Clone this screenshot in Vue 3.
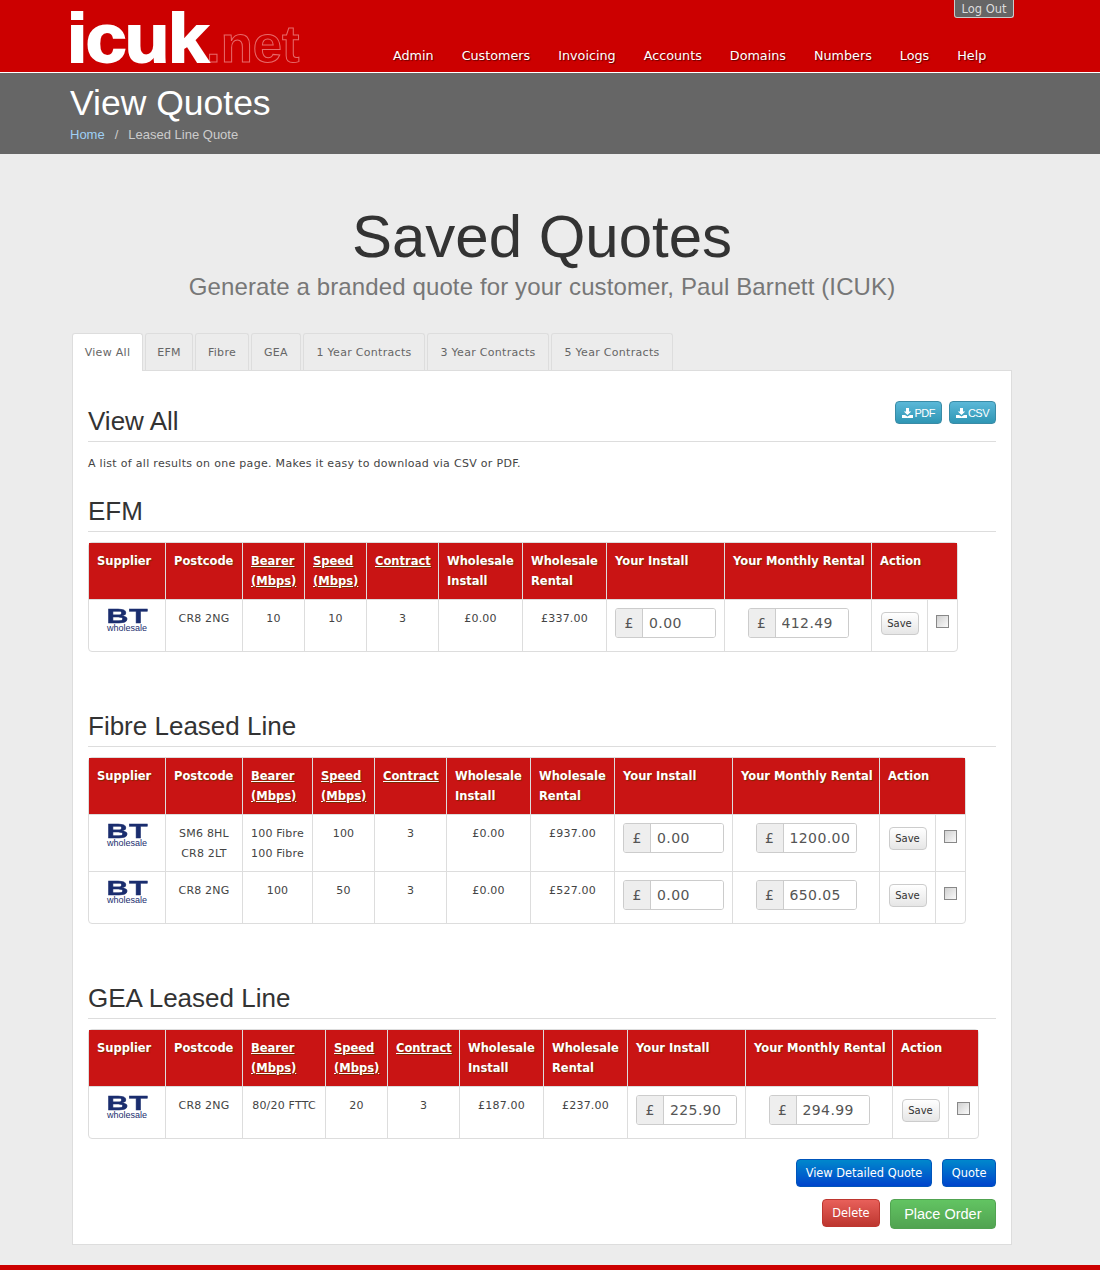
<script setup>
const tabs = ["View All", "EFM", "Fibre", "GEA", "1 Year Contracts", "3 Year Contracts", "5 Year Contracts"];
const navItems = ["Admin", "Customers", "Invoicing", "Accounts", "Domains", "Numbers", "Logs", "Help"];

const columns = [
    { lines: ["Supplier"] },
    { lines: ["Postcode"] },
    { lines: ["Bearer", "(Mbps)"], link: true },
    { lines: ["Speed", "(Mbps)"], link: true },
    { lines: ["Contract"], link: true },
    { lines: ["Wholesale", "Install"] },
    { lines: ["Wholesale", "Rental"] },
    { lines: ["Your Install"] },
    { lines: ["Your Monthly Rental"] },
    { lines: ["Action"], span: 2 },
];

const sections = [
    {
        title: "EFM",
        widths: [76, 77, 62, 62, 72, 84, 84, 118, 147, 56, 30],
        rows: [
            { postcode: ["CR8 2NG"], bearer: ["10"], speed: "10", contract: "3", install: "£0.00", rental: "£337.00", yourInstall: "0.00", yourRental: "412.49" },
        ],
    },
    {
        title: "Fibre Leased Line",
        widths: [76, 77, 70, 62, 72, 84, 84, 118, 147, 56, 30],
        rows: [
            { postcode: ["SM6 8HL", "CR8 2LT"], bearer: ["100 Fibre", "100 Fibre"], speed: "100", contract: "3", install: "£0.00", rental: "£937.00", yourInstall: "0.00", yourRental: "1200.00" },
            { postcode: ["CR8 2NG"], bearer: ["100"], speed: "50", contract: "3", install: "£0.00", rental: "£527.00", yourInstall: "0.00", yourRental: "650.05" },
        ],
    },
    {
        title: "GEA Leased Line",
        widths: [76, 77, 83, 62, 72, 84, 84, 118, 147, 56, 30],
        rows: [
            { postcode: ["CR8 2NG"], bearer: ["80/20 FTTC"], speed: "20", contract: "3", install: "£187.00", rental: "£237.00", yourInstall: "225.90", yourRental: "294.99" },
        ],
    },
];

function tableWidth(widths) {
    return widths.reduce((a, b) => a + b, 0) + 2;
}
</script>

<template>
    <div class="page">
        <header class="topbar">
            <div class="logo"><span class="logo-main">icuk</span><span class="logo-net">.net</span></div>
            <div class="topbar-right">
                <a class="logout">Log Out</a>
                <nav class="nav">
                    <a v-for="item in navItems" :key="item">{{ item }}</a>
                </nav>
            </div>
        </header>

        <div class="subhead">
            <h1>View Quotes</h1>
            <div class="crumbs"><a>Home</a><span class="sep">/</span><span>Leased Line Quote</span></div>
        </div>

        <main class="content">
            <div class="hero">
                <h2>Saved Quotes</h2>
                <p>Generate a branded quote for your customer, Paul Barnett (ICUK)</p>
            </div>

            <ul class="tabs">
                <li v-for="(tab, i) in tabs" :key="tab" :class="{ active: i == 0 }">{{ tab }}</li>
            </ul>

            <section class="panel">
                <div class="title-row">
                    <h3>View All</h3>
                    <div class="exports">
                        <a class="btn-info" v-for="label in ['PDF', 'CSV']" :key="label">
                            <svg width="11" height="10" viewBox="0 0 11 10">
                                <path d="M4 0h3v3.5h2.2L5.5 7 1.800 3.500H4z" fill="#fff" />
                                <path d="M0 7h3l2.500 1.500L8 7h3v3H0z" fill="#fff" />
                            </svg>{{ label }}
                        </a>
                    </div>
                </div>
                <p class="lead">A list of all results on one page. Makes it easy to download via CSV or PDF.</p>

                <div class="quote-section" v-for="section in sections" :key="section.title">
                    <h3 class="section-title">{{ section.title }}</h3>
                    <table class="quotes" :style="{ width: tableWidth(section.widths) + 'px' }">
                        <colgroup>
                            <col v-for="(w, i) in section.widths" :key="i" :style="{ width: w + 'px' }" />
                        </colgroup>
                        <thead>
                            <tr>
                                <th v-for="col in columns" :key="col.lines[0] + col.lines[1]" :colspan="col.span || 1">
                                    <template v-for="line in col.lines" :key="line">
                                        <a v-if="col.link" class="sort">{{ line }}</a>
                                        <span v-else>{{ line }}</span>
                                        <br />
                                    </template>
                                </th>
                            </tr>
                        </thead>
                        <tbody>
                            <tr v-for="(row, r) in section.rows" :key="r">
                                <td>
                                    <div class="bt">
                                        <span class="bt-mark">BT</span>
                                        <span class="bt-sub">wholesale</span>
                                    </div>
                                </td>
                                <td><div v-for="p in row.postcode" :key="p">{{ p }}</div></td>
                                <td><div v-for="(b, k) in row.bearer" :key="k">{{ b }}</div></td>
                                <td>{{ row.speed }}</td>
                                <td>{{ row.contract }}</td>
                                <td>{{ row.install }}</td>
                                <td>{{ row.rental }}</td>
                                <td>
                                    <div class="money"><span>£</span><input :value="row.yourInstall" /></div>
                                </td>
                                <td>
                                    <div class="money"><span>£</span><input :value="row.yourRental" /></div>
                                </td>
                                <td><button class="save">Save</button></td>
                                <td><input class="tick" type="checkbox" /></td>
                            </tr>
                        </tbody>
                    </table>
                </div>

                <div class="actions">
                    <a class="btn btn-blue">View Detailed Quote</a>
                    <a class="btn btn-blue">Quote</a>
                </div>
                <div class="actions second">
                    <a class="btn btn-red">Delete</a>
                    <a class="btn btn-green">Place Order</a>
                </div>
            </section>
        </main>

        <footer class="foot"></footer>
    </div>
</template>

<style>
html, body {
    margin: 0;
    background: #ececec;
}
</style>

<style scoped>
.page {
    width: 1100px;
    height: 1270px;
    overflow: hidden;
    background: #ececec;
    font-family: "DejaVu Sans", Verdana, sans-serif;
    font-size: 11px;
    line-height: 20px;
    color: #444;
}
.topbar {
    display: flex;
    height: 72px;
    padding-left: 70px;
    background: #cc0000;
    border-bottom: 1px solid #fff;
}
.logo {
    width: 323px;
    height: 72px;
    flex-shrink: 0;
    font-family: "Liberation Sans", Arial, sans-serif;
    font-weight: bold;
    line-height: 78px;
    white-space: nowrap;
}
.logo-main {
    display: inline-block;
    margin-left: -3px;
    margin-right: 7px;
    font-size: 69px;
    letter-spacing: -1.500px;
    color: #fff;
    -webkit-text-stroke: 2px #fff;
    transform: scaleX(1.06);
    transform-origin: left;
}
.logo-net {
    font-size: 52.500px;
    color: transparent;
    -webkit-text-stroke: 1px #e76a6a;
}
.topbar-right {
    width: 621px;
    display: flex;
    flex-direction: column;
}
.logout {
    align-self: flex-end;
    box-sizing: border-box;
    width: 60px;
    height: 18px;
    background: #666;
    border: 1px solid #ccc;
    border-top: 0;
    border-radius: 0 0 3px 3px;
    color: #ddd;
    font-size: 11.5px;
    line-height: 18px;
    text-align: center;
}
.nav {
    display: flex;
    gap: 28px;
    margin-top: 28px;
    font-size: 12.750px;
    color: #fff;
    text-shadow: 1px 1px 1px #660000;
}
.subhead {
    height: 81px;
    padding-left: 70px;
    background: #666;
    color: #fff;
}
.subhead h1 {
    margin: 0;
    padding-top: 8px;
    font-family: "Liberation Sans", Arial, sans-serif;
    font-size: 35.500px;
    font-weight: normal;
    line-height: 44px;
}
.crumbs {
    font-family: "Liberation Sans", Arial, sans-serif;
    font-size: 13px;
    color: #ccc;
}
.crumbs a {
    color: #9fd0f5;
}
.sep {
    margin: 0 10px;
}
.content {
    padding: 0 88px 0 72px;
}
.hero {
    padding-top: 47px;
    font-family: "Liberation Sans", Arial, sans-serif;
    text-align: center;
}
.hero h2 {
    margin: 0;
    font-size: 60px;
    font-weight: normal;
    line-height: 72px;
    color: #333;
}
.hero p {
    margin: -1px 0 0;
    font-size: 24px;
    letter-spacing: 0.12px;
    line-height: 30px;
    color: #777;
}
.tabs {
    display: grid;
    grid-template-columns: 71px 48px 54px 50px 122px 122px 122px;
    gap: 2px;
    margin: 31px 0 0;
    padding: 0;
    list-style: none;
}
.tabs li {
    box-sizing: border-box;
    height: 37px;
    border: 1px solid #ddd;
    border-bottom: 0;
    border-radius: 3px 3px 0 0;
    line-height: 37px;
    color: #666;
    letter-spacing: 0.3px;
    text-align: center;
    white-space: nowrap;
}
.tabs li.active {
    position: relative;
    z-index: 1;
    background: #fff;
    height: 38px;
    margin-bottom: -1px;
}
.panel {
    box-sizing: border-box;
    height: 875px;
    padding: 30px 15px 0;
    background: #fff;
    border: 1px solid #ddd;
}
.title-row {
    position: relative;
    height: 40px;
    border-bottom: 1px solid #ddd;
}
h3 {
    margin: 0;
    font-family: "Liberation Sans", Arial, sans-serif;
    font-size: 26px;
    font-weight: normal;
    line-height: 30px;
    color: #333;
}
.title-row h3 {
    padding-top: 5px;
}
.exports {
    position: absolute;
    top: 0;
    right: 0;
    display: flex;
    gap: 7px;
}
.btn-info {
    box-sizing: border-box;
    display: flex;
    align-items: center;
    justify-content: center;
    gap: 1px;
    height: 23px;
    padding: 0 6px;
    border: 1px solid #3a8ba6;
    border-radius: 4px;
    background: linear-gradient(#5bb8d8, #2f96b4);
    color: #fff;
    font-family: "Liberation Sans", Arial, sans-serif;
    font-size: 11px;
    letter-spacing: -0.5px;
}
.lead {
    margin: 12px 0 0;
    height: 22px;
    letter-spacing: 0.3px;
}
.section-title {
    height: 30px;
    padding-bottom: 5px;
    border-bottom: 1px solid #ddd;
    margin-bottom: 10px;
}
.quote-section {
    margin-top: 59px;
}
.lead + .quote-section {
    margin-top: 20px;
}
.quotes {
    table-layout: fixed;
    border-collapse: separate;
    border-spacing: 0;
    border: 1px solid #ddd;
    border-radius: 4px;
}
.quotes th {
    box-sizing: border-box;
    height: 56px;
    padding: 8px;
    background: #c91414;
    color: #fff;
    font-size: 11.5px;
    font-weight: bold;
    text-align: left;
    vertical-align: top;
    white-space: nowrap;
    text-shadow: 1px 1px 1px #7a2a00;
    border-left: 1px solid #ddd;
}
.quotes th:first-child {
    border-left: 0;
}
.sort {
    color: #fff;
    text-decoration: underline;
}
.quotes td {
    box-sizing: border-box;
    height: 52px;
    padding: 9px 8px 7px;
    border-top: 1px solid #ddd;
    border-left: 1px solid #ddd;
    text-align: center;
    vertical-align: top;
    white-space: nowrap;
    letter-spacing: 0.2px;
}
.quotes td:first-child {
    border-left: 0;
}
.bt {
    display: flex;
    flex-direction: column;
    align-items: center;
    margin-top: -1px;
    color: #1a2d6e;
}
.bt-mark {
    font-family: "Liberation Sans", Arial, sans-serif;
    font-size: 21px;
    font-weight: bold;
    line-height: 15px;
    transform: scaleX(1.45);
    -webkit-text-stroke: 0.4px #1a2d6e;
}
.bt-sub {
    font-family: "Liberation Sans", Arial, sans-serif;
    font-size: 9px;
    letter-spacing: 0;
    line-height: 10px;
}
.money {
    display: flex;
    width: 101px;
    height: 30px;
    margin: -1px auto 0;
    box-sizing: border-box;
    border: 1px solid #ccc;
    border-radius: 3px;
    font-size: 14px;
    overflow: hidden;
}
.money span {
    width: 27px;
    flex-shrink: 0;
    box-sizing: border-box;
    background: #eee;
    border-right: 1px solid #ccc;
    line-height: 28px;
    text-align: center;
    color: #555;
}
.money input {
    width: 100%;
    min-width: 0;
    border: 0;
    padding: 0 6px;
    outline: none;
    background: #fff;
    font-family: "DejaVu Sans", Verdana, sans-serif;
    font-size: 14px;
    letter-spacing: 0.4px;
    color: #555;
}
.save {
    box-sizing: border-box;
    width: 38px;
    height: 23px;
    margin-top: 3px;
    padding: 0;
    border: 1px solid #ccc;
    border-radius: 4px;
    background: linear-gradient(#fff, #e6e6e6);
    font-family: "DejaVu Sans", Verdana, sans-serif;
    font-size: 10px;
    color: #333;
}
.tick {
    appearance: none;
    display: block;
    box-sizing: border-box;
    width: 13px;
    height: 13px;
    margin: 6px 0 0 0;
    border: 1px solid #888;
    background: linear-gradient(135deg, #d0d0d0, #fafafa);
}
.actions {
    display: flex;
    justify-content: flex-end;
    gap: 10px;
    margin-top: 20px;
}
.actions.second {
    margin-top: 12px;
    align-items: flex-start;
}
.btn {
    box-sizing: border-box;
    display: block;
    height: 28px;
    padding: 0 9px;
    border-radius: 4px;
    line-height: 27px;
    color: #fff;
    font-size: 11.4px;
}
.btn-blue {
    border: 1px solid #0055bb;
    background: linear-gradient(#0088cc, #0044cc);
}
.btn-blue:last-child {
    padding: 0 8.500px;
}
.btn-red {
    border: 1px solid #bd362f;
    background: linear-gradient(#e8605a, #bd362f);
}
.btn-green {
    height: 30px;
    padding: 0 13.500px;
    border: 1px solid #51a351;
    background: linear-gradient(#62c462, #51a351);
    font-family: "Liberation Sans", Arial, sans-serif;
    font-size: 14.500px;
    line-height: 29px;
}
.foot {
    height: 5px;
    margin-top: 20px;
    background: #cc0000;
}
</style>
